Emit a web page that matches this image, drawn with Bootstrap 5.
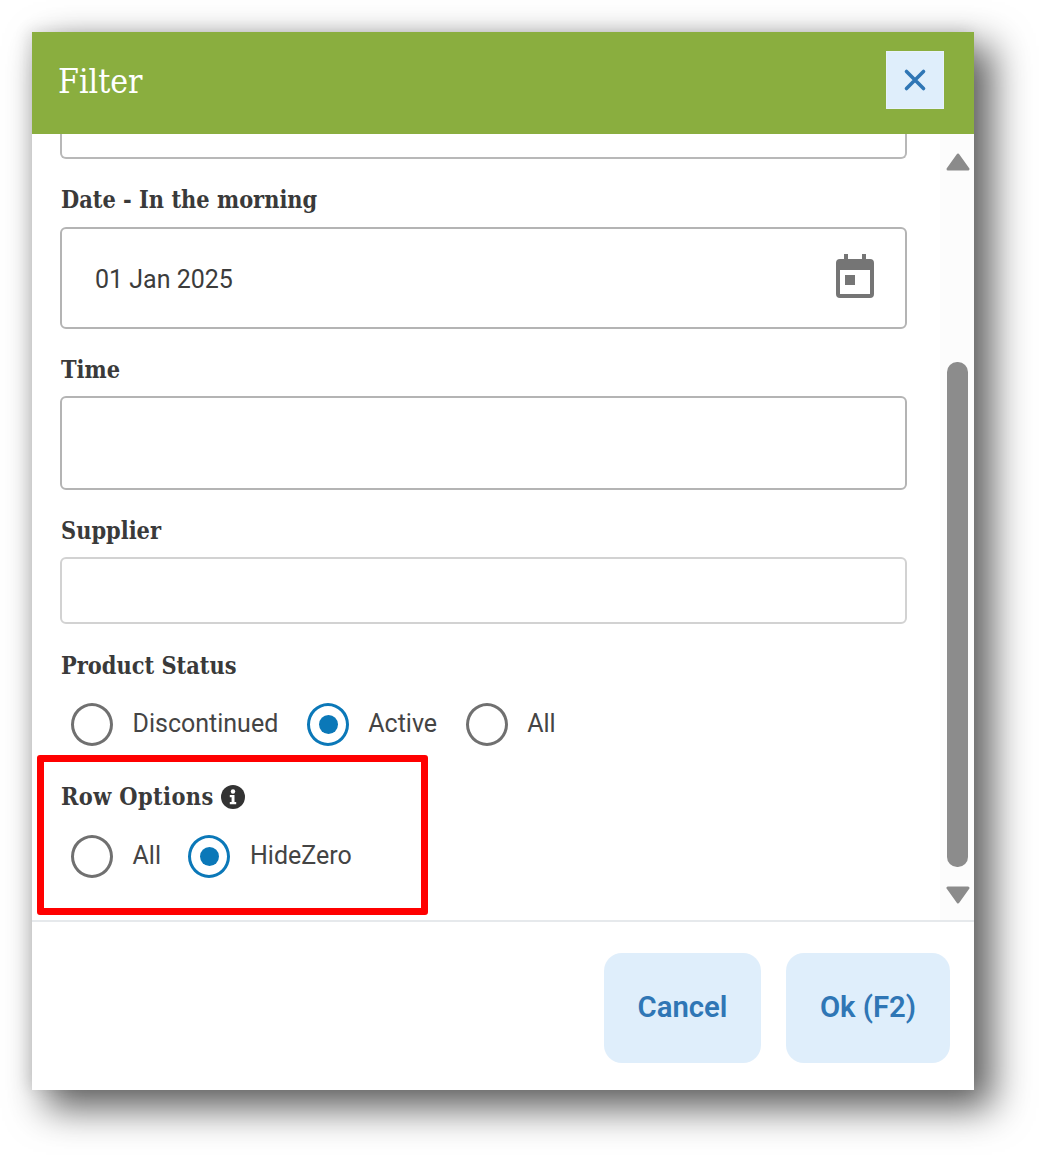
<!DOCTYPE html>
<html lang="en">

<head>
    <meta charset="UTF-8">
    <meta name="viewport" content="width=device-width, initial-scale=1.0">
    <title>Filter</title>
    <link rel="stylesheet" href="https://cdn.jsdelivr.net/npm/bootstrap@5.3.3/dist/css/bootstrap.min.css">
    <style>
        body { background: #fff; font-family: Roboto, sans-serif; color: #333; }
        .page-wrap { padding: 32px 65px 65px 32px; height: 1155px; overflow: hidden; }
        .filter-dialog { width: 942px; height: 1058px; background: #fff; position: relative; box-shadow: 16px 16px 36px 2px #5c5c5c, -4px -2px 14px rgba(0, 0, 0, .1); }
        .filter-head { height: 102px; background: #8aae3f; padding: 0 30px 0 26px; }
        .filter-title { font-family: "DejaVu Serif Condensed", "DejaVu Serif", serif; font-size: 33.5px; color: #fff; margin: -2px 0 0; font-weight: 400; }
        .close-box { width: 58px; height: 58px; padding: 0; border: 1px solid #e8f2fb; border-radius: 0; background: #dfeefb; margin-top: -6px; }
        .filter-main { height: 788px; overflow: hidden; border-bottom: 2px solid #e6e9ec; }
        .form-area { width: 908px; padding: 0 33px 0 28px; }
        .scroll-rail { width: 34px; background: #fcfcfc; position: relative; }
        .scroll-up { position: absolute; top: 19px; left: 6px; }
        .scroll-down { position: absolute; top: 752px; left: 6px; }
        .scroll-thumb { position: absolute; top: 228px; left: 7px; width: 21px; height: 505px; background: #8c8c8c; border-radius: 10px; }
        .field-cut { height: 25px; border: 2px solid #b8b8b8; border-top: 0; border-radius: 0 0 6px 6px; }
        .field-label { font-family: "DejaVu Serif Condensed", "DejaVu Serif", serif; font-weight: 700; font-size: 23.3px; line-height: 28px; padding-top: 2px; color: #3a3a3a; margin: 0 0 0 1px; }
        .field-box { border: 2px solid #b4b4b4; border-radius: 6px; background: #fff; }
        .date-box { height: 102px; margin-top: 13px; padding: 0 30px 0 33px; font-size: 25px; color: #3c3c3c; }
        .date-text { padding-top: 4px; }
        .date-icon { margin-top: -5px; }
        .time-box { height: 94px; margin-top: 12px; }
        .supplier-box { height: 67px; margin-top: 12px; border-color: #d2d2d2; }
        .label-date { margin-top: 25px; }
        .label-time { margin-top: 25px; }
        .label-supplier { margin-top: 25px; }
        .label-status { margin-top: 26px; }
        .label-row { margin-top: 35px; letter-spacing: .4px; }
        .radio-line { padding-left: 11px; margin-top: 22px; height: 44px; font-size: 25px; color: #444; }
        .radio-line.second { margin-top: 23px; }
        .radio-dot { width: 42px; height: 43px; border-radius: 50%; border: 3px solid #707070; background: #fff; flex: none; margin-right: 19.5px; }
        .radio-dot.picked { border-color: #0b78b8; position: relative; }
        .radio-dot.picked::after { content: ""; position: absolute; top: 9px; left: 9px; width: 19px; height: 19px; border-radius: 50%; background: #0b78b8; }
        .radio-item { margin-right: 27.5px; }
        .status-line .radio-item { margin-right: 28.5px; }
        .info-mark { margin-left: 7px; }
        .filter-foot { height: 168px; padding: 31px 24px 0 0; }
        .foot-btn { height: 110px; border: 0; border-radius: 18px; background: #dfeefb; color: #2f76b5; font-size: 29.3px; font-weight: 600; font-family: Roboto, sans-serif; padding: 0; }
        .foot-btn:hover { background: #dfeefb; color: #2f76b5; }
        .btn-cancel { width: 157px; }
        .btn-ok { width: 164px; margin-left: 25px; }
        .red-frame { position: absolute; left: 5px; top: 723px; width: 391px; height: 160px; border: 7px solid #f00; border-radius: 3px; pointer-events: none; }
    </style>
</head>

<body>
    <main class="page-wrap">
        <div class="filter-dialog d-flex flex-column">

            <div class="filter-head d-flex align-items-center justify-content-between">
                <h1 class="filter-title">Filter</h1>
                <button type="button" class="close-box d-flex align-items-center justify-content-center" aria-label="Close">
                    <svg width="24" height="24" viewBox="0 0 24 24"><path d="M3.5 3.5 20.5 20.5M20.5 3.5 3.5 20.5" stroke="#2f76b5" stroke-width="3.6" stroke-linecap="round" fill="none"/></svg>
                </button>
            </div>

            <div class="filter-main d-flex">
                <form class="form-area">
                    <div class="field-cut"></div>

                    <p class="field-label label-date">Date - In the morning</p>
                    <div class="field-box date-box d-flex align-items-center justify-content-between">
                        <span class="date-text">01 Jan 2025</span>
                        <svg class="date-icon" width="40" height="44" viewBox="0 0 40 44">
                            <path fill="#757575" fill-rule="evenodd" d="M9 0h4v5h14V0h4v5h4a4 4 0 0 1 4 4v31a4 4 0 0 1-4 4H5a4 4 0 0 1-4-4V9a4 4 0 0 1 4-4h4zM5 16v24h30V16z"/>
                            <rect x="10" y="21" width="10" height="10" fill="#757575"/>
                        </svg>
                    </div>

                    <p class="field-label label-time">Time</p>
                    <div class="field-box time-box"></div>

                    <p class="field-label label-supplier">Supplier</p>
                    <div class="field-box supplier-box"></div>

                    <p class="field-label label-status">Product Status</p>
                    <div class="radio-line status-line d-flex align-items-center">
                        <div class="radio-item d-flex align-items-center"><span class="radio-dot"></span>Discontinued</div>
                        <div class="radio-item d-flex align-items-center"><span class="radio-dot picked"></span>Active</div>
                        <div class="radio-item d-flex align-items-center"><span class="radio-dot"></span>All</div>
                    </div>

                    <p class="field-label label-row d-flex align-items-center">Row Options
                        <svg class="info-mark" width="24" height="24" viewBox="0 0 24 24">
                            <circle cx="12" cy="12" r="12" fill="#333"/>
                            <circle cx="12" cy="6.5" r="2.2" fill="#fff"/>
                            <path d="M8.8 10h4.7v7h1.7v2.2H8.8V17h1.8v-4.8H8.8z" fill="#fff"/>
                        </svg>
                    </p>
                    <div class="radio-line second d-flex align-items-center">
                        <div class="radio-item d-flex align-items-center"><span class="radio-dot"></span>All</div>
                        <div class="radio-item d-flex align-items-center"><span class="radio-dot picked"></span>HideZero</div>
                    </div>
                </form>

                <div class="scroll-rail">
                    <svg class="scroll-up" width="24" height="18" viewBox="0 0 24 18"><path d="M12 2 22 16H2z" fill="#8b8b8b" stroke="#8b8b8b" stroke-width="3" stroke-linejoin="round"/></svg>
                    <span class="scroll-thumb"></span>
                    <svg class="scroll-down" width="24" height="18" viewBox="0 0 24 18"><path d="M2 2H22L12 16z" fill="#8b8b8b" stroke="#8b8b8b" stroke-width="3" stroke-linejoin="round"/></svg>
                </div>
            </div>

            <div class="filter-foot d-flex justify-content-end align-items-start">
                <button type="button" class="btn foot-btn btn-cancel">Cancel</button>
                <button type="button" class="btn foot-btn btn-ok">Ok (F2)</button>
            </div>

            <div class="red-frame"></div>
        </div>
    </main>

    <script src="https://cdn.jsdelivr.net/npm/bootstrap@5.3.3/dist/js/bootstrap.bundle.min.js"></script>
</body>

</html>
